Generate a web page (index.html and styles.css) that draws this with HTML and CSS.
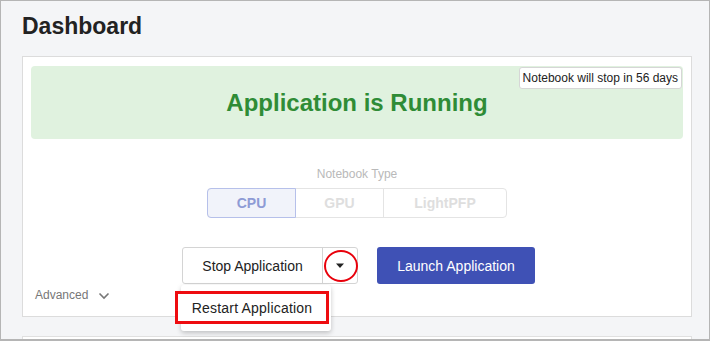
FILE: index.html
```html
<!DOCTYPE html>
<html>
<head>
<meta charset="utf-8">
<link rel="stylesheet" href="styles.css">
</head>
<body>
<div class="frame">
  <h1 class="title">Dashboard</h1>
  <div class="card">
    <div class="status">
      <span class="badge">Notebook will stop in 56 days</span>
      <div class="status-text">Application is Running</div>
    </div>
    <div class="type-label">Notebook Type</div>
    <div class="segmented">
      <div class="seg seg-active">CPU</div>
      <div class="seg seg-gpu">GPU</div>
      <div class="seg seg-light">LightPFP</div>
    </div>
    <div class="actions">
      <div class="split">
        <div class="split-main">Stop Application</div>
        <div class="split-toggle">
          <svg width="10" height="6" viewBox="0 0 10 6"><path d="M1 0.5 L9 0.5 L5 5 Z" fill="#222"/></svg>
        </div>
        <div class="ring"></div>
        <div class="menu">
          <div class="menu-item">Restart Application</div>
        </div>
      </div>
      <div class="launch">Launch Application</div>
    </div>
    <div class="advanced">Advanced
      <svg width="12" height="8" viewBox="0 0 12 8"><path d="M1.5 1.5 L6 6 L10.5 1.5" fill="none" stroke="#777" stroke-width="1.6"/></svg>
    </div>
  </div>
  <div class="card2"></div>
</div>
</body>
</html>
```
FILE: styles.css
```css
* { box-sizing: border-box; }
html, body { margin: 0; padding: 0; }
body {
  font-family: "Liberation Sans", Arial, sans-serif;
  width: 710px;
  height: 341px;
  overflow: hidden;
  background: #fff;
}
.frame {
  width: 710px;
  height: 341px;
  border: 1px solid #b5b5b5;
  border-bottom-width: 2px;
  background: #f4f5f7;
  padding: 0 17px 0 21px;
  overflow: hidden;
}
.title {
  margin: 0;
  padding-top: 12px;
  height: 55px;
  font-size: 23px;
  line-height: 26px;
  font-weight: bold;
  color: #222;
}
.card {
  background: #fff;
  border: 1px solid #dcdcdc;
  height: 261px;
  padding: 9px 8px 0 8px;
  display: flex;
  flex-direction: column;
  align-items: center;
}
.status {
  position: relative;
  align-self: stretch;
  height: 73px;
  background: #e0f2df;
  border-radius: 4px;
  display: flex;
  align-items: center;
  justify-content: center;
}
.status-text {
  color: #2f8c36;
  font-weight: bold;
  font-size: 24px;
  line-height: 28px;
}
.badge {
  position: absolute;
  top: 1px;
  right: 1px;
  background: #fff;
  border: 1px solid #d6d6d6;
  border-radius: 3px;
  font-size: 12px;
  color: #222;
  padding: 3px 3px 3px 3px;
  line-height: 14px;
}
.type-label {
  margin-top: 28px;
  font-size: 12px;
  line-height: 14px;
  color: #b9b9b9;
}
.segmented {
  margin-top: 7px;
  display: flex;
  height: 30px;
  border: 1px solid #e4e4e4;
  border-radius: 4px;
}
.seg {
  display: flex;
  align-items: center;
  justify-content: center;
  font-weight: bold;
  font-size: 14px;
  color: #dedede;
}
.seg-active {
  width: 89px;
  margin: -1px 0 -1px -1px;
  border: 1px solid #b6c0ea;
  border-radius: 4px 0 0 4px;
  background: #f1f3fa;
  color: #8e9bd5;
}
.seg-gpu {
  width: 88px;
  border-right: 1px solid #e4e4e4;
}
.seg-light {
  width: 122px;
}
.actions {
  margin-top: 29px;
  display: flex;
  gap: 19px;
  padding-left: 3px;
}
.split {
  position: relative;
  display: flex;
  height: 37px;
  border: 1px solid #d4d4d4;
  border-radius: 3px;
  background: #fff;
}
.split-main {
  width: 140px;
  display: flex;
  align-items: center;
  justify-content: center;
  font-size: 14px;
  color: #222;
  border-right: 1px solid #d4d4d4;
}
.split-toggle {
  width: 34px;
  display: flex;
  align-items: center;
  justify-content: center;
  padding-top: 1px;
}
.ring {
  position: absolute;
  left: 141px;
  top: 2px;
  width: 34px;
  height: 32px;
  border: 2.5px solid #e8000b;
  border-radius: 50%;
}
.menu {
  position: absolute;
  left: -2px;
  top: 37px;
  width: 150px;
  height: 46px;
  background: #fff;
  border-radius: 3px;
  box-shadow: 0 2px 5px rgba(0,0,0,0.22);
  padding-top: 6px;
  z-index: 2;
}
.menu-item {
  margin-left: -6px;
  width: 154px;
  height: 33px;
  border: 3px solid #ee0c10;
  display: flex;
  align-items: center;
  justify-content: center;
  font-size: 14px;
  letter-spacing: 0.2px;
  color: #222;
  background: #fff;
}
.launch {
  width: 158px;
  height: 37px;
  background: #3f51b5;
  border-radius: 3px;
  color: #fff;
  font-size: 14px;
  display: flex;
  align-items: center;
  justify-content: center;
}
.advanced {
  align-self: flex-start;
  margin-top: 4px;
  padding-left: 4px;
  font-size: 12px;
  color: #777;
  display: flex;
  align-items: center;
  gap: 10px;
  line-height: 14px;
}
.advanced svg { margin-top: 2px; }
.card2 {
  margin-top: 19px;
  height: 30px;
  background: #fff;
  border: 1px solid #e0e0e0;
}
```
